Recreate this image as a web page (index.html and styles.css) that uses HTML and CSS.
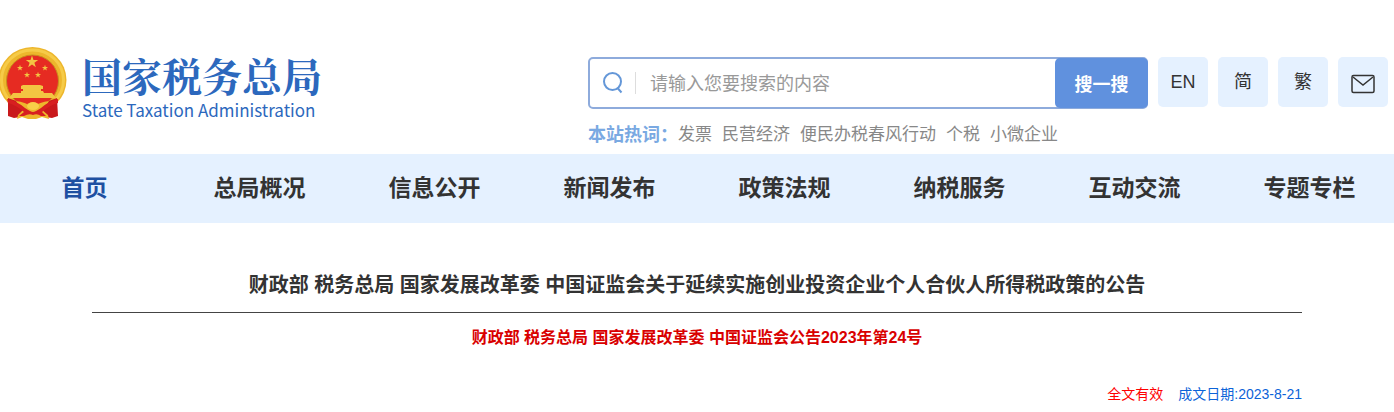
FILE: index.html
```html
<!DOCTYPE html>
<html lang="zh-CN">
<head>
<meta charset="utf-8">
<title>国家税务总局</title>
<link rel="stylesheet" href="styles.css">
</head>
<body>

<header class="header">
  <a class="logo" href="#">
    <svg class="emblem" viewBox="0 0 67 73" aria-hidden="true">
      <defs>
        <polygon id="star" points="0,-10 2.3,-3.1 9.5,-3.1 3.7,1.2 5.9,8.1 0,3.9 -5.9,8.1 -3.7,1.2 -9.5,-3.1 -2.3,-3.1"/>
      </defs>
      <ellipse cx="32.5" cy="33" rx="34" ry="33" fill="#edb62c"/>
      <ellipse cx="32.5" cy="33" rx="31" ry="30" fill="none" stroke="#f6cb48" stroke-width="3"/>
      <ellipse cx="32.5" cy="34" rx="26" ry="26" fill="#e62b22" stroke="#c8901e"/>
      <g fill="#f3c542">
        <use href="#star" transform="translate(32 15) scale(.65)"/>
        <use href="#star" transform="translate(20 21) scale(.32)"/>
        <use href="#star" transform="translate(45 21) scale(.32)"/>
        <use href="#star" transform="translate(27 28) scale(.32)"/>
        <use href="#star" transform="translate(38 28) scale(.32)"/>
        <path d="M23 38 L40 38 L43 39 L43 42 L41 42 L41 44 L43 44 L44 46 L52 46 L56 51 L9 51 L13 46 L21 46 L21 44 L23 44 L23 42 L21 42 L21 39Z"/>
      </g>
      <path fill="#c9191c" d="M8 51 L19 55 L24 62 L20 70 L14 71 L8 69Z M57 51 L46 55 L41 62 L45 70 L52 71 L58 69Z"/>
      <path fill="#edb62c" d="M16 54 Q25 55 32.5 60 Q40 55 49 54 L45 61 L41 62 L48 68 L49 72 L42 70 L36 72 L28 72 L22 70 L17 72 L18 68 L24 62 L20 61Z"/>
      <path fill="#d71f20" d="M7 52 Q17 54 25 61 Q31 65 33 65 Q35 65 41 61 Q49 54 58 52 L58 56 Q50 58 42 65 L46 69 L41 69 Q37 66 33 68 Q29 66 24 69 L19 69 L24 65 Q16 58 8 56Z"/>
      <ellipse cx="33" cy="59" rx="6" ry="4" fill="#f8cf48"/>
    </svg>
    <span class="logo-text">
      <span class="logo-cn">国家税务总局</span>
      <span class="logo-en">State Taxation Administration</span>
    </span>
  </a>

  <div class="tools">
    <div class="tools-row">
      <form class="search">
        <label class="search-icon" for="keyword" aria-label="搜索">
          <svg viewBox="0 0 22 22" width="22" height="22" fill="none" stroke="#6497d8" stroke-width="2">
            <circle cx="10.5" cy="9.5" r="8.5"/>
            <path d="M15.500 16 L19.500 20.500"/>
          </svg>
        </label>
        <input id="keyword" type="text" placeholder="请输入您要搜索的内容">
        <button type="submit">搜一搜</button>
      </form>
      <a class="tool" href="#">EN</a>
      <a class="tool" href="#">简</a>
      <a class="tool" href="#">繁</a>
      <a class="tool mail" href="#" aria-label="邮箱">
        <svg viewBox="0 0 26 20" width="26" height="20" fill="none" stroke="#333" stroke-width="1.500">
          <rect x="2" y="1.500" width="22" height="17" rx="1.500"/>
          <path d="M3 3 L13 11 L23 3"/>
        </svg>
      </a>
    </div>
    <div class="hot">
      <strong>本站热词：</strong>
      <a href="#">发票</a>
      <a href="#">民营经济</a>
      <a href="#">便民办税春风行动</a>
      <a href="#">个税</a>
      <a href="#">小微企业</a>
    </div>
  </div>
</header>

<nav class="nav">
  <ul>
    <li><a class="active" href="#">首页</a></li>
    <li><a href="#">总局概况</a></li>
    <li><a href="#">信息公开</a></li>
    <li><a href="#">新闻发布</a></li>
    <li><a href="#">政策法规</a></li>
    <li><a href="#">纳税服务</a></li>
    <li><a href="#">互动交流</a></li>
    <li><a href="#">专题专栏</a></li>
  </ul>
</nav>

<main class="article">
  <h1>财政部 税务总局 国家发展改革委 中国证监会关于延续实施创业投资企业个人合伙人所得税政策的公告</h1>
  <h2>财政部 税务总局 国家发展改革委 中国证监会公告2023年第24号</h2>
  <p class="info">
    <span class="valid">全文有效</span>
    <span>成文日期:2023-8-21</span>
  </p>
</main>

</body>
</html>
```
FILE: styles.css
```css
* {padding:0;margin:0;box-sizing:border-box;}
body {background:#fff;font-family:"Liberation Sans","Noto Sans CJK SC",sans-serif;color:#333;font-size:16px;}
a {color:inherit;text-decoration:none;}
ul {list-style:none;}
svg {display:block;}

.header {display:flex;justify-content:space-between;padding:47px 6px 0 0;height:154px;}

.logo {display:flex;align-items:flex-start;color:#2c68bd;}
.emblem {width:67px;height:73px;}
.logo-text {display:flex;flex-direction:column;margin:6px 0 0 15px;}
.logo-cn {font-family:"Noto Serif CJK SC","Noto Sans CJK SC",serif;font-size:40px;line-height:44px;font-weight:bold;}
.logo-en {font-family:"Noto Sans CJK SC",sans-serif;font-size:17px;line-height:26px;}

.tools {width:800px;padding-top:10px;}
.tools-row {display:flex;gap:10px;}
.search {display:flex;flex:1;height:52px;border:2px solid #8eabdc;border-radius:5px;}
.search-icon {align-self:center;padding:0 11px 0 12px;border-right:1px solid #ddd;}
.search input {flex:1;min-width:0;border:0;outline:0;background:none;padding:0 0 2px 14px;font:18px "Noto Sans CJK SC",sans-serif;}
.search input::placeholder {color:#999;}
.search button {width:93px;margin:-1px -2px -1px 0;border:0;border-radius:5px;background:#6091de;color:#fff;font:bold 18px "Noto Sans CJK SC",sans-serif;}
.tool {width:50px;height:50px;border-radius:5px;background:#e5f1ff;font-size:18px;line-height:50px;text-align:center;}
.mail {display:flex;align-items:center;justify-content:center;padding-top:4px;}

.hot {display:flex;gap:10px;margin-top:13px;color:#888;font-size:17px;line-height:26px;}
.hot strong {margin-right:-10px;color:#7aa9e2;font-size:18px;}

.nav {background:#e5f1ff;overflow:hidden;}
.nav ul {display:flex;margin:0 -3px;}
.nav li {flex:1;}
.nav a {display:block;font-size:23px;line-height:69px;font-weight:bold;text-align:center;}
.nav .active {color:#1e50a2;}

.article {max-width:1210px;margin:0 auto;padding-top:45px;}
h1 {padding-bottom:10px;border-bottom:1px solid #444;font-size:20px;line-height:34px;text-align:center;}
h2 {margin-top:12px;color:#d90000;font-size:16px;line-height:26px;text-align:center;}
.info {display:flex;justify-content:flex-end;gap:15px;margin-top:32px;color:#0c63d8;font-size:14px;line-height:22px;}
.valid {color:#f00;}
```
